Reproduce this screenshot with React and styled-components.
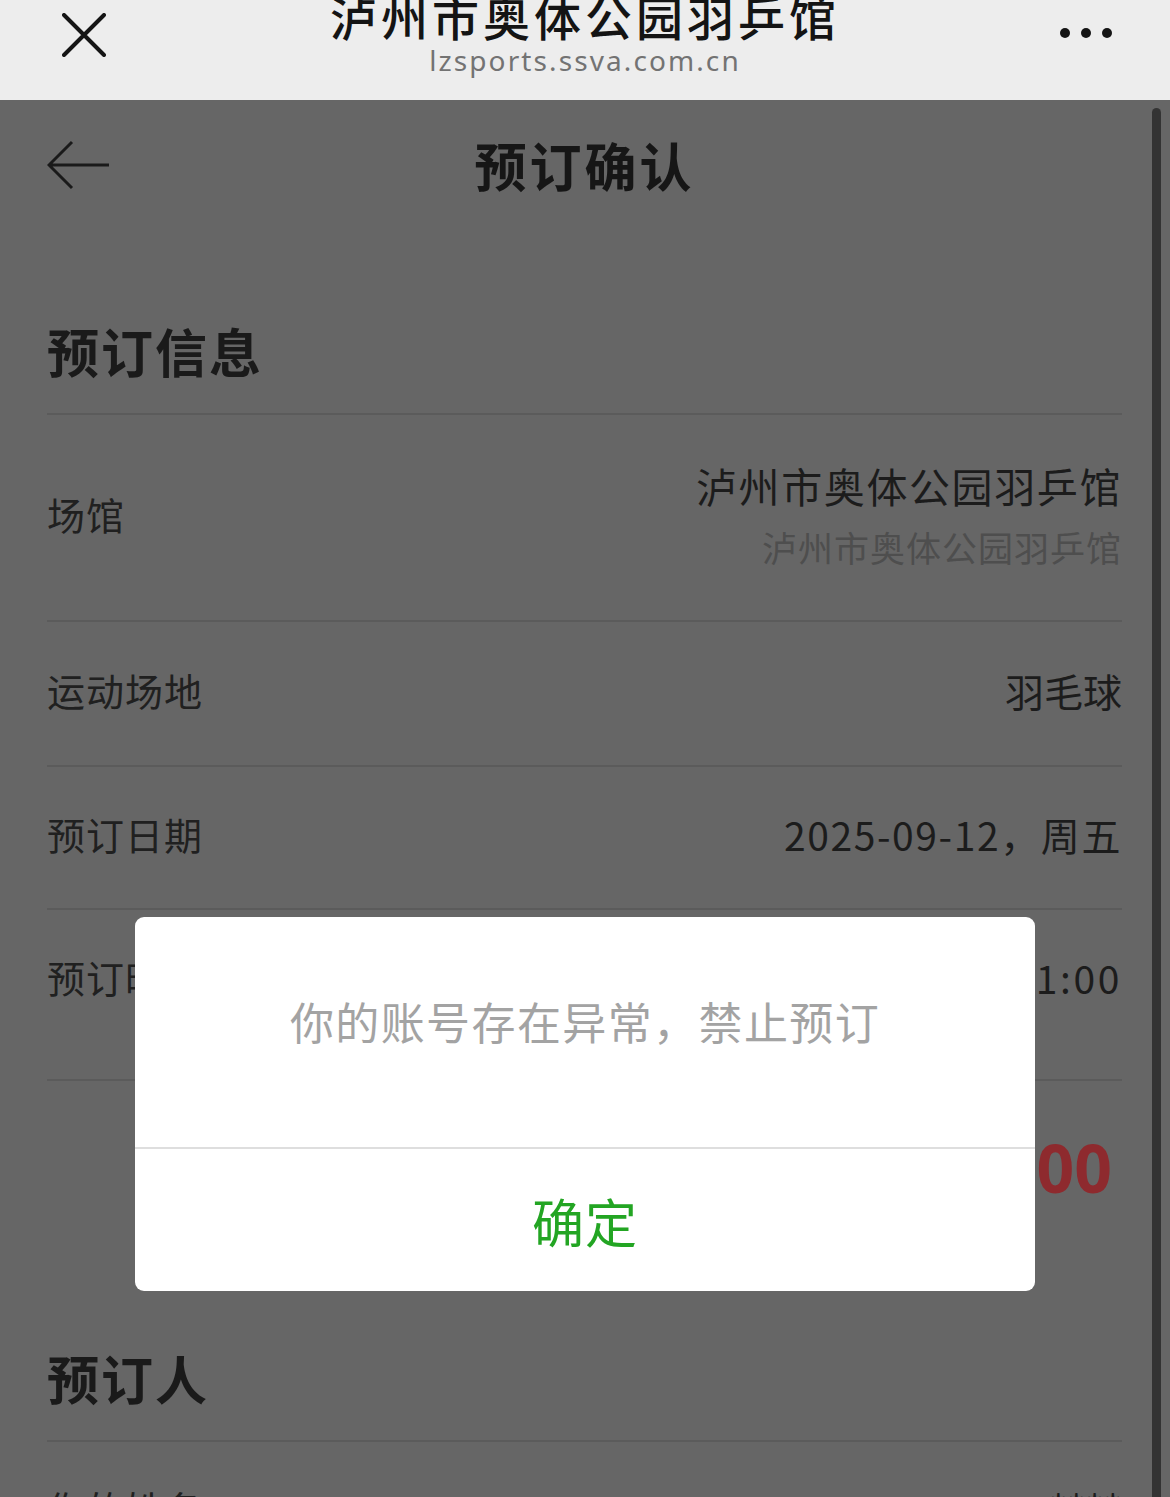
import styled, { createGlobalStyle } from 'styled-components';

const GlobalStyle = createGlobalStyle`
  body {
    margin: 0;
    font-family: "Noto Sans CJK SC", "Noto Sans", sans-serif;
  }
`;

const Shell = styled.div`
  position: relative;
  width: 1170px;
  height: 1497px;
  overflow: hidden;
  background: #666;
`;

const TopBar = styled.div`
  height: 100px;
  background: #ededed;
  display: grid;
  grid-template-columns: 160px 1fr 160px;
  align-items: start;
`;

const CloseBtn = styled.div`
  padding: 13px 0 0 62px;
  svg {
    display: block;
  }
`;

const TitleBox = styled.div`
  display: flex;
  flex-direction: column;
  align-items: center;
`;

const SiteTitle = styled.div`
  margin-top: -7px;
  font-size: 47px;
  line-height: 46px;
  font-weight: 500;
  letter-spacing: 4px;
  color: #141414;
  white-space: nowrap;
`;

const SiteUrl = styled.div`
  margin-top: 4px;
  font-family: "Noto Sans", sans-serif;
  font-size: 28px;
  line-height: 34px;
  letter-spacing: 2.1px;
  color: #737373;
`;

const MoreDots = styled.div`
  display: flex;
  justify-content: flex-end;
  gap: 11px;
  padding: 28px 58px 0 0;
  span {
    width: 10px;
    height: 10px;
    border-radius: 50%;
    background: #151515;
  }
`;

const Page = styled.div`
  padding: 0 48px 0 47px;
`;

const NavBar = styled.div`
  position: relative;
  height: 134px;
  display: flex;
  align-items: center;
  justify-content: center;
`;

const Back = styled.div`
  position: absolute;
  left: 0;
  top: 40px;
  svg {
    display: block;
  }
`;

const NavTitle = styled.h1`
  margin: 0 0 5px;
  font-size: 52px;
  font-weight: 700;
  letter-spacing: 3px;
  color: #161616;
`;

const SectionHead = styled.h2`
  margin: 0;
  height: 181px;
  box-sizing: border-box;
  display: flex;
  align-items: flex-end;
  padding-bottom: 32px;
  font-size: 52px;
  line-height: 60px;
  font-weight: 700;
  letter-spacing: 2px;
  color: #1a1a1a;
  border-bottom: 2px solid #5b5b5b;
`;

const Row = styled.div`
  height: ${(p) => p.h}px;
  box-sizing: border-box;
  padding-bottom: ${(p) => p.lift || 8}px;
  display: flex;
  align-items: center;
  justify-content: space-between;
  border-bottom: ${(p) => (p.plain ? 'none' : '2px solid #5b5b5b')};
`;

const Label = styled.span`
  font-size: 38px;
  color: #202020;
  letter-spacing: 1px;
`;

const Value = styled.div`
  display: flex;
  flex-direction: column;
  align-items: flex-end;
  gap: 14px;
  font-size: ${(p) => p.size || 39}px;
  letter-spacing: ${(p) => p.spacing || 0}px;
  color: #1c1c1c;
  line-height: 52px;
`;

const SubValue = styled.span`
  font-size: 35px;
  line-height: 44px;
  letter-spacing: 1px;
  color: #4e4e4e;
`;

const Price = styled.span`
  margin-right: 10px;
  font-family: "Open Sans", "Noto Sans", sans-serif;
  font-size: 66px;
  font-weight: 700;
  color: #8e2a2e;
`;

const ScrollThumb = styled.div`
  position: absolute;
  top: 108px;
  bottom: 0;
  right: 9px;
  width: 9px;
  border-radius: 5px 5px 0 0;
  background: #333;
`;

const Dialog = styled.div`
  position: absolute;
  top: 917px;
  left: 135px;
  width: 900px;
  background: #fff;
  border-radius: 9px;
  overflow: hidden;
`;

const DialogBody = styled.div`
  height: 232px;
  box-sizing: border-box;
  padding-top: 74px;
  text-align: center;
  font-size: 44px;
  line-height: 60px;
  letter-spacing: 1.4px;
  color: #a3a3a3;
  border-bottom: 2px solid #dedede;
`;

const DialogButton = styled.div`
  height: 142px;
  display: flex;
  align-items: center;
  justify-content: center;
  font-size: 52px;
  color: #23a523;
  letter-spacing: 1px;
`;

const rows = [
  { label: '运动场地', value: '羽毛球', h: 145 },
  { label: '预订日期', value: '2025-09-12，周五', h: 143, spacing: 1.6 },
  { label: '预订时间', value: '20:00-21:00', h: 171, spacing: 2.6, lift: 36 },
];

const App = () => {
  return (
    <>
      <GlobalStyle />
      <Shell>
        <TopBar>
          <CloseBtn>
            <svg width="44" height="44" viewBox="0 0 44 44">
              <path d="M2 2 L42 42 M42 2 L2 42" stroke="#151515" strokeWidth="4" strokeLinecap="round" />
            </svg>
          </CloseBtn>
          <TitleBox>
            <SiteTitle>泸州市奥体公园羽乒馆</SiteTitle>
            <SiteUrl>lzsports.ssva.com.cn</SiteUrl>
          </TitleBox>
          <MoreDots>
            <span />
            <span />
            <span />
          </MoreDots>
        </TopBar>

        <Page>
          <NavBar>
            <Back>
              <svg width="64" height="50" viewBox="0 0 64 50">
                <path d="M62 25 H2 M25 2 L2 25 L25 48" stroke="#1a1a1a" strokeWidth="3" fill="none" />
              </svg>
            </Back>
            <NavTitle>预订确认</NavTitle>
          </NavBar>

          <SectionHead>预订信息</SectionHead>
          <Row h={207}>
            <Label>场馆</Label>
            <Value size={41} spacing={1.6}>
              <span>泸州市奥体公园羽乒馆</span>
              <SubValue>泸州市奥体公园羽乒馆</SubValue>
            </Value>
          </Row>
          {rows.map((r) => (
            <Row key={r.label} h={r.h} lift={r.lift}>
              <Label>{r.label}</Label>
              <Value spacing={r.spacing}>{r.value}</Value>
            </Row>
          ))}
          <Row h={180} plain>
            <span />
            <Price>¥40.00</Price>
          </Row>

          <SectionHead>预订人</SectionHead>
          <Row h={140}>
            <Label>你的姓名</Label>
            <Value>****</Value>
          </Row>
        </Page>

        <ScrollThumb />

        <Dialog>
          <DialogBody>你的账号存在异常，禁止预订</DialogBody>
          <DialogButton>确定</DialogButton>
        </Dialog>
      </Shell>
    </>
  );
};

export default App;
